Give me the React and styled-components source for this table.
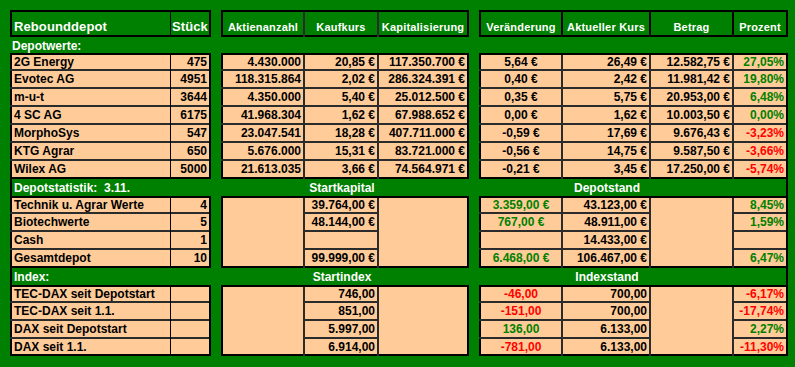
import React from "react";
import styled, { createGlobalStyle } from "styled-components";

const GREEN = "#008000";
const PEACH = "#ffcc99";
const INK = "#000";
const RULE = "#2b2b2b";
const POS = "#008000";
const NEG = "#ff0000";

const GlobalStyle = createGlobalStyle`
  body {
    margin: 0;
    background: ${GREEN};
    font-family: "Liberation Sans", Arial, sans-serif;
  }
`;

// a line is a colour or [colour, width]
const lw = (l) => (l ? (Array.isArray(l) ? l[1] : 2) : 0);
const lc = (l) => (Array.isArray(l) ? l[0] : l);

const lines = (p) => {
  const parts = [];
  if (p.$t) parts.push(`inset 0 ${lw(p.$t)}px 0 0 ${lc(p.$t)}`);
  if (p.$r) parts.push(`inset -${lw(p.$r)}px 0 0 0 ${lc(p.$r)}`);
  if (p.$b) parts.push(`inset 0 -${lw(p.$b)}px 0 0 ${lc(p.$b)}`);
  if (p.$l) parts.push(`inset ${lw(p.$l)}px 0 0 0 ${lc(p.$l)}`);
  return parts.length ? `box-shadow: ${parts.join(", ")};` : "";
};

const Sheet = styled.div`
  display: grid;
  grid-template-columns: 161px 40px 10px 84px 74px 90px 10px 84px 88px 83px 54px;
  grid-template-rows: 27px 16px repeat(7, 18px) 17px repeat(4, 18px) 17px repeat(3, 18px) 17px;
  padding: 10px 0 0 10px;
  min-height: 367px;
  box-sizing: border-box;
  background: ${GREEN};
`;

const Cell = styled.div`
  display: flex;
  align-items: center;
  justify-content: ${(p) =>
    p.$align === "right" ? "flex-end" : p.$align === "center" ? "center" : "flex-start"};
  padding: ${(p) => lw(p.$t)}px ${(p) => lw(p.$r) + 2}px ${(p) => lw(p.$b)}px
    ${(p) => lw(p.$l) + 2}px;
  box-sizing: border-box;
  white-space: pre;
  overflow: visible;
  font-weight: bold;
  font-size: 12px;
  line-height: 1;
  ${lines}
`;

const HeaderCell = styled(Cell)`
  align-items: flex-end;
  padding-bottom: 4px;
  color: #fff;
  font-size: ${(p) => (p.$big ? "13px" : "11px")};
  letter-spacing: ${(p) => (p.$big ? "0.1px" : "0.2px")};
  background: ${GREEN};
`;

const DataCell = styled(Cell)`
  background: ${PEACH};
  color: ${(p) => p.$color || "#000"};
`;

const GapCell = styled.div`
  background: ${GREEN};
`;

const BandCell = styled(Cell)`
  background: ${GREEN};
  color: #fff;
  padding-top: 1px;
`;

const FullBand = styled(BandCell)`
  grid-column: 1 / -1;
`;

// column specs, gaps marked
const COLS = [
  { align: "left", l: INK, r: [INK, 1] },
  { align: "right", r: INK },
  { gap: true },
  { align: "right", l: INK, r: RULE },
  { align: "right", r: RULE },
  { align: "right", r: INK },
  { gap: true },
  { align: "center", l: INK, r: RULE },
  { align: "right", r: RULE },
  { align: "right", r: RULE },
  { align: "right", r: INK },
];

const HEADERS = [
  ["Rebounddepot", "left", true, [INK, 1]],
  ["Stück", "center", true, INK],
  null,
  ["Aktienanzahl", "center", false, RULE],
  ["Kaufkurs", "center", false, RULE],
  ["Kapitalisierung", "center", false, INK],
  null,
  ["Veränderung", "center", false, INK],
  ["Aktueller Kurs", "center", false, INK],
  ["Betrag", "center", false, INK],
  ["Prozent", "center", false, INK],
];

const stocks = [
  ["2G Energy", "475", "4.430.000", "20,85 €", "117.350.700 €", "5,64 €", "26,49 €", "12.582,75 €", "27,05%"],
  ["Evotec AG", "4951", "118.315.864", "2,02 €", "286.324.391 €", "0,40 €", "2,42 €", "11.981,42 €", "19,80%"],
  ["m-u-t", "3644", "4.350.000", "5,40 €", "25.012.500 €", "0,35 €", "5,75 €", "20.953,00 €", "6,48%"],
  ["4 SC AG", "6175", "41.968.304", "1,62 €", "67.988.652 €", "0,00 €", "1,62 €", "10.003,50 €", "0,00%"],
  ["MorphoSys", "547", "23.047.541", "18,28 €", "407.711.000 €", "-0,59 €", "17,69 €", "9.676,43 €", "-3,23%"],
  ["KTG Agrar", "650", "5.676.000", "15,31 €", "83.721.000 €", "-0,56 €", "14,75 €", "9.587,50 €", "-3,66%"],
  ["Wilex AG", "5000", "21.613.035", "3,66 €", "74.564.971 €", "-0,21 €", "3,45 €", "17.250,00 €", "-5,74%"],
];

const stats = [
  ["Technik u. Agrar Werte", "4", "", "39.764,00 €", "", "3.359,00 €", "43.123,00 €", "", "8,45%"],
  ["Biotechwerte", "5", "", "48.144,00 €", "", "767,00 €", "48.911,00 €", "", "1,59%"],
  ["Cash", "1", "", "", "", "", "14.433,00 €", "", ""],
  ["Gesamtdepot", "10", "", "99.999,00 €", "", "6.468,00 €", "106.467,00 €", "", "6,47%"],
];

const indices = [
  ["TEC-DAX seit Depotstart", "", "", "746,00", "", "-46,00", "700,00", "", "-6,17%"],
  ["TEC-DAX seit 1.1.", "", "", "851,00", "", "-151,00", "700,00", "", "-17,74%"],
  ["DAX seit Depotstart", "", "", "5.997,00", "", "136,00", "6.133,00", "", "2,27%"],
  ["DAX seit 1.1.", "", "", "6.914,00", "", "-781,00", "6.133,00", "", "-11,30%"],
];

const signColor = (v) => (v ? (v.startsWith("-") ? NEG : POS) : undefined);

// one row of 11 grid cells; values skip the gaps
const renderRow = (key, values, { first, last, merged = [], colored = [] }) => {
  let vi = 0;
  return COLS.map((col, ci) => {
    if (col.gap) return <GapCell key={`${key}-${ci}`} />;
    const idx = vi++;
    const v = values[idx];
    const bottom = last ? INK : merged.includes(idx) ? undefined : RULE;
    return (
      <DataCell
        key={`${key}-${ci}`}
        $align={col.align}
        $t={first ? INK : undefined}
        $l={col.l}
        $r={col.r}
        $b={bottom}
        $color={colored.includes(idx) ? signColor(v) : undefined}
      >
        {v}
      </DataCell>
    );
  });
};

const renderBand = (key, label, mid, right) =>
  COLS.map((col, ci) => (
    <BandCell
      key={`${key}-${ci}`}
      $align={ci === 0 ? "left" : "center"}
      $l={ci === 0 ? INK : undefined}
      $r={ci === 10 ? INK : undefined}
    >
      {ci === 0 ? label : ci === 4 ? mid : ci === 8 ? right : ""}
    </BandCell>
  ));

const App = () => (
  <>
    <GlobalStyle />
    <Sheet>
      {HEADERS.map((h, ci) =>
        h ? (
          <HeaderCell
            key={`h-${ci}`}
            $align={h[1]}
            $big={h[2]}
            $t={INK}
            $b={INK}
            $l={COLS[ci].l}
            $r={h[3]}
          >
            {h[0]}
          </HeaderCell>
        ) : (
          <GapCell key={`h-${ci}`} />
        )
      )}
      <FullBand $align="left">Depotwerte:</FullBand>
      {stocks.map((row, i) =>
        renderRow(`s${i}`, row, { first: i === 0, last: i === stocks.length - 1, colored: [8] })
      )}
      {renderBand("b1", "Depotstatistik:  3.11.", "Startkapital", "Depotstand")}
      {stats.map((row, i) =>
        renderRow(`d${i}`, row, {
          first: i === 0,
          last: i === stats.length - 1,
          merged: [2, 4, 7],
          colored: [5, 8],
        })
      )}
      {renderBand("b2", "Index:", "Startindex", "Indexstand")}
      {indices.map((row, i) =>
        renderRow(`x${i}`, row, {
          first: i === 0,
          last: i === indices.length - 1,
          merged: [2, 4, 7],
          colored: [5, 8],
        })
      )}
    </Sheet>
  </>
);

export default App;
